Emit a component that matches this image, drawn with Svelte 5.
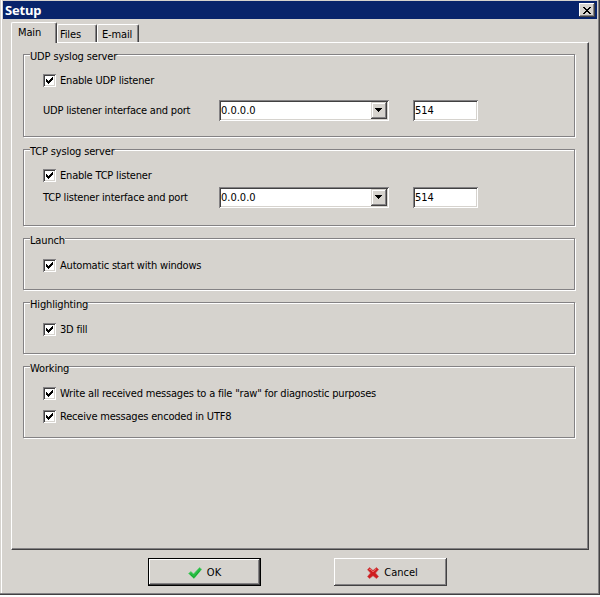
<script>
	let tab = "Main";
	const tabs = ["Main", "Files", "E-mail"];

	let groups = [
		{
			title: "UDP syslog server",
			cls: "udp",
			checks: [{ text: "Enable UDP listener", on: true }],
			label: "UDP listener interface and port",
			host: "0.0.0.0",
			port: "514",
		},
		{
			title: "TCP syslog server",
			cls: "tcp",
			checks: [{ text: "Enable TCP listener", on: true }],
			label: "TCP listener interface and port",
			host: "0.0.0.0",
			port: "514",
		},
		{
			title: "Launch",
			cls: "launch",
			checks: [{ text: "Automatic start with windows", on: true }],
		},
		{
			title: "Highlighting",
			cls: "highlighting",
			checks: [{ text: "3D fill", on: true }],
		},
		{
			title: "Working",
			cls: "working",
			checks: [
				{ text: 'Write all received messages to a file "raw" for diagnostic purposes', on: true },
				{ text: "Receive messages encoded in UTF8", on: true },
			],
		},
	];
</script>

<div class="window">
	<div class="titlebar">
		<span class="caption">Setup</span>
		<button class="close" aria-label="Close">
			<svg width="8" height="7" viewBox="0 0 8 7" shape-rendering="crispEdges">
				<path d="M0 0h2v1h1v1h2v-1h1v-1h2v1h-1v1h-1v1h-1v1h1v1h1v1h1v1h-2v-1h-1v-1h-2v1h-1v1h-2v-1h1v-1h1v-1h1v-1h-1v-1h-1v-1h-1z" />
			</svg>
		</button>
	</div>

	<div class="tabs">
		{#each tabs as name}
			<button class="tab" class:active={tab === name} on:click={() => (tab = name)}>{name}</button>
		{/each}
	</div>

	<div class="panel">
		{#each groups as group}
			<div class="group {group.cls}">
				<div class="legend"><span>{group.title}</span></div>
				{#each group.checks as check}
					<label class="check">
						<input type="checkbox" bind:checked={check.on} />
						<span class="box">
							{#if check.on}
								<svg width="7" height="7" viewBox="0 0 7 7" shape-rendering="crispEdges">
									<path d="M0 2h1v1h1v1h1v-1h1v-1h1v-1h1v-1h1v3h-1v1h-1v1h-1v1h-1v1h-1v-1h-1v-1h-1z" />
								</svg>
							{/if}
						</span>
						<span class="text">{check.text}</span>
					</label>
				{/each}
				{#if group.label}
					<div class="row">
						<span class="label">{group.label}</span>
						<div class="combo">
							<span>{group.host}</span>
							<button class="drop" aria-label="Open">
								<svg width="7" height="4" viewBox="0 0 7 4" shape-rendering="crispEdges">
									<path d="M0 0h7v1h-1v1h-1v1h-1v1h-1v-1h-1v-1h-1v-1h-1z" />
								</svg>
							</button>
						</div>
						<input class="port" bind:value={group.port} />
					</div>
				{/if}
			</div>
		{/each}
	</div>

	<div class="buttons">
		<button class="btn default">
			<svg width="14" height="12" viewBox="0 0 14 12">
				<path d="M0.5 6.5 3 4.5 5.5 7 11.5.5 13.7 2.3 6 11.5z" fill="#27bd43" stroke="#65ce75" stroke-width=".7" />
				<path d="M2.5 7.5 6 10.6 12 3.5" fill="none" stroke="#14a62d" />
			</svg>
			<span>OK</span>
		</button>
		<button class="btn cancel">
			<svg width="12" height="12" viewBox="0 0 12 12">
				<path d="M2.5.5 6 3.5 9.5.5 11.6 2.6 8.5 6 11.5 9.5 9.5 11.6 6 8.7 2.5 11.6.5 9.6 3.5 6 .5 2.7z" fill="#cf1d20" stroke="#c94b4b" stroke-width=".6" />
				<path d="M2 2.7 3 2 6 4.9 9.3 2" fill="none" stroke="#ed6b66" />
			</svg>
			<span>Cancel</span>
		</button>
	</div>
</div>

<style>
	:global(body) {
		margin: 0;
		background: #fff;
	}

	.window {
		box-sizing: border-box;
		width: 600px;
		height: 595px;
		padding: 1px 1px 0 2px;
		background: #d6d3ce;
		border-right: 1px solid #424142;
		border-bottom: 1px solid #424142;
		box-shadow: inset -1px -1px #848284, inset 1px 0 #d6d3ce, inset 2px 0 #fff;
		font: 11px/13px "DejaVu Sans Condensed", "DejaVu Sans", sans-serif;
		color: #000;
	}

	button,
	input {
		box-sizing: border-box;
		margin: 0;
		padding: 0;
		border: 0;
		border-radius: 0;
		font: inherit;
		color: inherit;
		background: #d6d3ce;
	}

	svg {
		display: block;
		flex: none;
	}

	.titlebar {
		display: flex;
		align-items: center;
		justify-content: space-between;
		width: 594px;
		height: 18px;
		margin-left: 1px;
		padding: 0 2px;
		box-sizing: border-box;
		background: #08246b;
		color: #fff;
	}

	.caption {
		font: bold 13px/16px "Noto Sans", sans-serif;
		letter-spacing: -0.2px;
		margin-top: -1px;
	}

	.close {
		display: flex;
		align-items: center;
		justify-content: center;
		width: 16px;
		height: 14px;
		color: #000;
		box-shadow: inset -1px -1px #424142, inset 1px 1px #fff, inset -2px -2px #848284;
	}

	.tabs {
		display: flex;
		align-items: flex-end;
		height: 23px;
		padding-left: 9px;
	}

	.tab {
		width: 40px;
		height: 18px;
		border-top: 1px solid #fff;
		border-left: 1px solid #fff;
		border-right: 1px solid #424142;
		border-radius: 2px 2px 0 0;
		box-shadow: inset -1px 0 #848284;
		padding: 1px 0 0 2px;
		text-align: left;
		white-space: nowrap;
		letter-spacing: -0.15px;
	}

	.tab:last-child {
		width: 42px;
		padding-left: 4px;
	}

	/* the open tab runs over the panel's top edge */
	.tab.active {
		position: relative;
		width: 46px;
		height: 21px;
		margin-bottom: -1px;
		padding: 0 0 2px 6px;
	}

	.panel {
		box-sizing: border-box;
		width: 578px;
		height: 508px;
		margin-left: 9px;
		padding: 11px 11px 0;
		border-left: 1px solid #fff;
		border-top: 1px solid #fff;
		border-right: 1px solid #424142;
		border-bottom: 1px solid #424142;
		box-shadow: inset -1px -1px #848284;
	}

	.group {
		box-sizing: border-box;
		width: 552px;
		border: 1px solid #848284;
		box-shadow: inset 1px 1px #fff, 1px 1px #fff;
		padding-left: 19px;
		margin-bottom: 12px;
	}

	.udp {
		height: 83px;
	}

	.tcp {
		height: 77px;
	}

	.launch,
	.highlighting {
		height: 52px;
	}

	.working {
		height: 72px;
	}

	.legend {
		height: 13px;
		margin: -5px 0 12px -13px;
		letter-spacing: -0.15px;
	}

	.legend span {
		display: inline-block;
		background: #d6d3ce;
	}

	.udp .legend,
	.tcp .legend {
		margin-bottom: 11px;
	}

	.check {
		display: flex;
		align-items: center;
		height: 13px;
		margin-bottom: 10px;
	}

	.check input {
		display: none;
	}

	.text,
	.label {
		letter-spacing: -0.2px;
		white-space: nowrap;
	}

	.box {
		display: flex;
		align-items: center;
		justify-content: center;
		width: 13px;
		height: 13px;
		margin-right: 4px;
		background: #fff;
		box-shadow: inset 1px 1px #848284, inset -1px -1px #fff, inset 2px 2px #424142, inset -2px -2px #d6d3ce;
	}

	.row {
		display: flex;
		align-items: center;
		height: 21px;
	}

	.udp .row {
		margin-top: 13px;
	}

	.tcp .row {
		margin-top: -5px;
	}

	.label {
		width: 176px;
	}

	.combo {
		box-sizing: border-box;
		display: flex;
		justify-content: space-between;
		align-items: center;
		width: 170px;
		height: 21px;
		padding: 2px;
		margin-right: 24px;
	}

	.combo,
	.port {
		background: #fff;
		box-shadow: inset 1px 1px #848284, inset -1px -1px #fff, inset 2px 2px #424142, inset -2px -2px #d6d3ce;
	}

	.drop {
		display: flex;
		align-items: center;
		justify-content: center;
		width: 16px;
		height: 17px;
		padding: 0 1px 1px 0;
		box-shadow: inset -1px -1px #424142, inset 1px 1px #d6d3ce, inset -2px -2px #848284, inset 2px 2px #fff;
	}

	.port {
		width: 65px;
		height: 21px;
		padding: 0 2px;
		outline: none;
	}

	.buttons {
		display: flex;
		gap: 73px;
		padding: 8px 0 0 146px;
	}

	.btn {
		display: flex;
		align-items: center;
		justify-content: center;
		gap: 5px;
		width: 113px;
		height: 28px;
		padding-top: 1px;
		box-shadow: inset -1px -1px #424142, inset 1px 1px #fff, inset -2px -2px #848284;
	}

	.btn.default {
		border: 1px solid #000;
	}

	.btn.cancel {
		padding-left: 4px;
	}
</style>
